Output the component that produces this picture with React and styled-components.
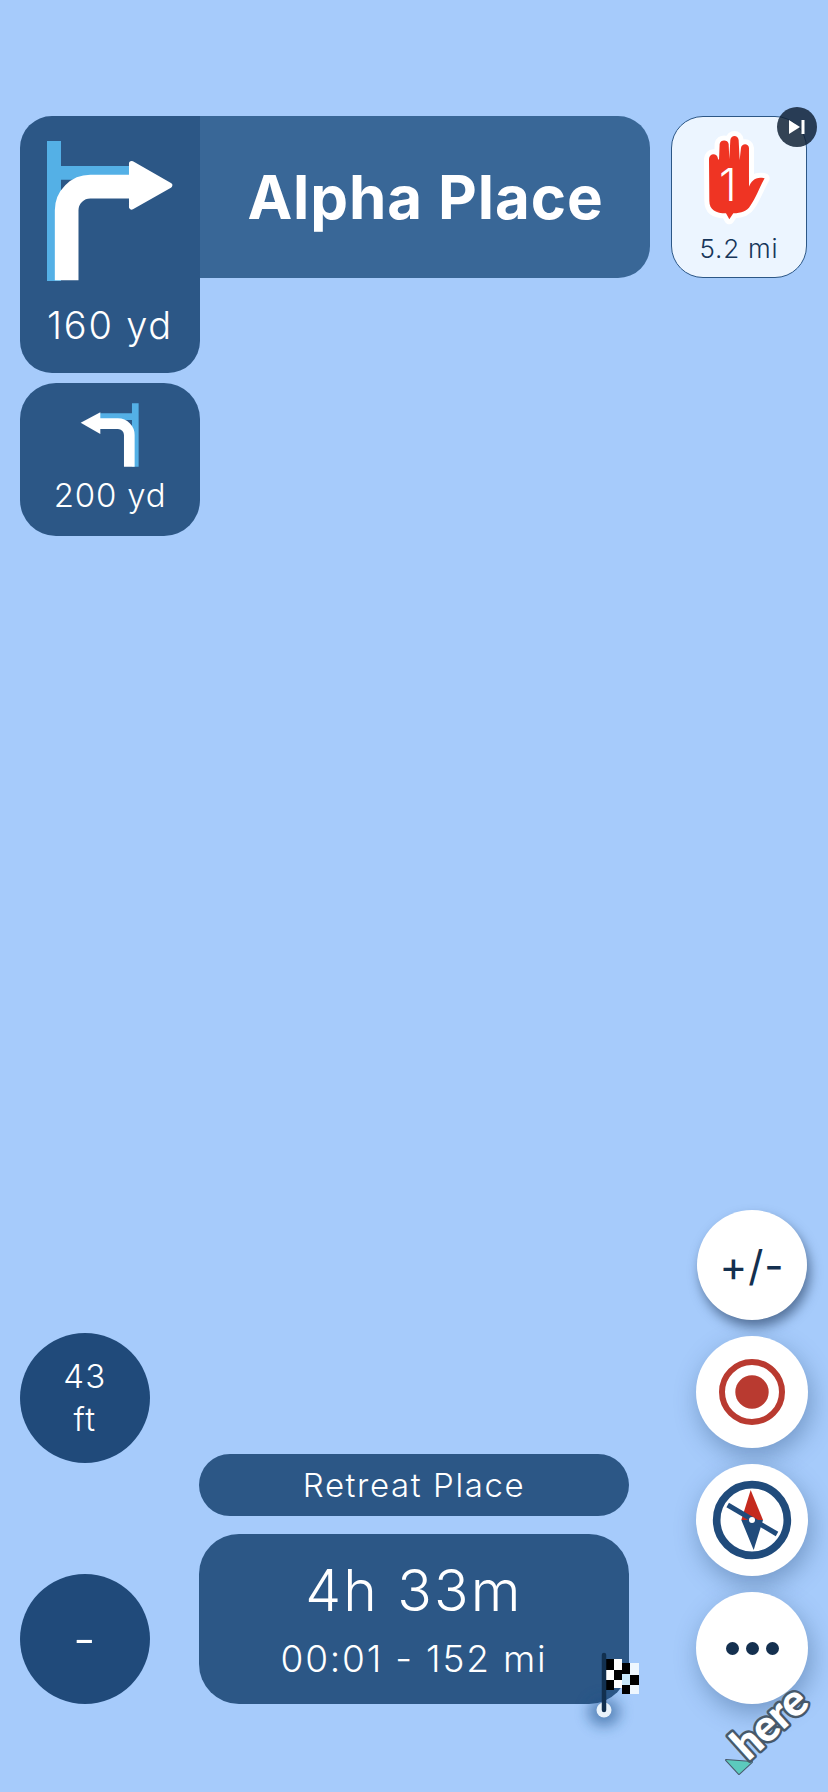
import React from "react";
import styled, { createGlobalStyle } from "styled-components";

const Global = createGlobalStyle`
  html, body { margin: 0; padding: 0; background: #a6cbfb; }
  * { box-sizing: border-box; }
`;

const Screen = styled.div`
  position: relative;
  width: 828px;
  height: 1792px;
  padding: 116px 20px 88px;
  display: flex;
  flex-direction: column;
  justify-content: space-between;
  overflow: hidden;
  background: #a6cbfb;
  font-family: Inter, "Liberation Sans", sans-serif;
  font-weight: 350;
  color: #fff;
`;

const TopRow = styled.div`
  display: flex;
  align-items: flex-start;
`;

const Maneuvers = styled.div`
  width: 180px;
  display: flex;
  flex-direction: column;
  gap: 10px;
`;

const ManeuverCard = styled.div`
  height: ${(p) => p.$height}px;
  padding-top: ${(p) => p.$top}px;
  display: flex;
  flex-direction: column;
  align-items: center;
  background: #2c5786;
  border-radius: ${(p) => p.$radius};
`;

const Distance = styled.div`
  font-size: ${(p) => p.$size}px;
  line-height: 1;
  margin-top: ${(p) => p.$gap}px;
  letter-spacing: ${(p) => p.$spacing}px;
  white-space: nowrap;
`;

const StreetBar = styled.div`
  width: 450px;
  height: 162px;
  display: flex;
  align-items: center;
  justify-content: center;
  padding-left: 1px;
  background: #396797;
  border-radius: 0 32px 32px 0;
  font-size: 60px;
  font-weight: 700;
  letter-spacing: 0.9px;
`;

const WarningCard = styled.div`
  position: relative;
  width: 136px;
  height: 162px;
  margin-left: 21px;
  padding-top: 13px;
  display: flex;
  flex-direction: column;
  align-items: center;
  background: #ecf5ff;
  border: 1px solid #2c5786;
  border-radius: 32px;
  color: #17365a;
`;

const WarningText = styled.div`
  margin-top: 4px;
  font-size: 26px;
  line-height: 30px;
  letter-spacing: 0.8px;
`;

const SkipBadge = styled.div`
  position: absolute;
  top: -10px;
  right: -11px;
  width: 40px;
  height: 40px;
  display: flex;
  align-items: center;
  justify-content: center;
  border-radius: 50%;
  background: rgba(16, 32, 52, 0.84);
`;

const BottomRow = styled.div`
  display: flex;
  align-items: flex-end;
`;

const InfoColumn = styled.div`
  width: 130px;
  display: flex;
  flex-direction: column;
  gap: 111px;
`;

const InfoCircle = styled.div`
  width: 130px;
  height: 130px;
  display: flex;
  align-items: center;
  justify-content: center;
  text-align: center;
  border-radius: 50%;
  background: #204a7a;
  font-size: ${(p) => p.$size}px;
  line-height: 43px;
  letter-spacing: 1.3px;
`;

const RouteColumn = styled.div`
  width: 430px;
  margin-left: 49px;
  display: flex;
  flex-direction: column;
  gap: 18px;
`;

const DestinationPill = styled.div`
  height: 62px;
  display: flex;
  align-items: center;
  justify-content: center;
  border-radius: 31px;
  background: #2c5786;
  font-size: 33px;
  letter-spacing: 1.6px;
`;

const EtaPanel = styled.div`
  position: relative;
  height: 170px;
  padding-top: 23px;
  display: flex;
  flex-direction: column;
  align-items: center;
  border-radius: 40px;
  background: #2c5786;
`;

const Duration = styled.div`
  font-size: 57px;
  line-height: 68px;
  letter-spacing: 2.2px;
`;

const Arrival = styled.div`
  margin-top: 12px;
  font-size: 37px;
  line-height: 44px;
  letter-spacing: 1.8px;
`;

const FlagMarker = styled.svg`
  position: absolute;
  left: 380px;
  top: 104px;
  overflow: visible;
`;

const ActionColumn = styled.div`
  width: 112px;
  margin-left: 67px;
  display: flex;
  flex-direction: column;
  gap: 16px;
`;

const ActionButton = styled.div`
  width: ${(p) => (p.$raised ? 110 : 112)}px;
  height: ${(p) => (p.$raised ? 110 : 112)}px;
  margin-left: ${(p) => (p.$raised ? 1 : 0)}px;
  display: flex;
  align-items: center;
  justify-content: center;
  gap: 7px;
  border-radius: 50%;
  background: #fff;
  color: #14304f;
  font-size: 42px;
  font-weight: 400;
  letter-spacing: 1px;
  box-shadow: ${(p) =>
    p.$raised
      ? "3px 7px 12px rgba(30, 55, 90, 0.6)"
      : "3px 9px 24px rgba(35, 70, 115, 0.38)"};
`;

const Dot = styled.span`
  width: 13px;
  height: 13px;
  border-radius: 50%;
  background: #14304f;
`;

const HereLogo = styled.svg`
  position: absolute;
  right: 12px;
  bottom: 14px;
  overflow: visible;
`;

const TurnRight = () => (
  <svg width="133.3" height="146.7" viewBox="130 110 400 440">
    <path d="M142 122H184V197H400V238H184V542H142Z" fill="#54b0e6" />
    <path d="M201 540V330A71 71 0 0 1 272 259H400" fill="none" stroke="#fff" strokeWidth="71" />
    <path d="M396 190L510 255L396 320Z" fill="#fff" stroke="#fff" strokeWidth="16" strokeLinejoin="round" />
  </svg>
);

const TurnLeft = () => (
  <svg width="63.3" height="70" viewBox="235 90 190 210">
    <path d="M417 100H397V130H300V150H397V290H417Z" fill="#54b0e6" />
    <path d="M389 290V195A34 34 0 0 0 355 161H295" fill="none" stroke="#fff" strokeWidth="32" />
    <path d="M302 127L243 158L302 192Z" fill="#fff" />
  </svg>
);

const Hand = () => (
  <svg width="73.3" height="100" viewBox="190 118 220 300">
    <path
      d="M272 386L262 368C232 368 212 358 212 330L211 205C212 186 236 186 238 204L241 208L243 160C245 146 268 146 270 160L272 205L275 148C277 132 298 132 300 148L303 208L307 172C309 157 330 157 331 172L331 288C338 270 352 256 378 263C362 290 352 322 335 345C325 362 308 367 284 368Z"
      fill="#ef3423"
      stroke="#fff"
      strokeWidth="30"
      strokeLinejoin="round"
      paintOrder="stroke"
    />
    <text x="268" y="330" textAnchor="middle" fill="#fff" fontSize="135" fontWeight="350" fontFamily="Inter, sans-serif">1</text>
  </svg>
);

const SkipIcon = () => (
  <svg width="18" height="16" viewBox="0 0 18 16">
    <path d="M1 1L12 8L1 15Z" fill="#fff" />
    <rect x="13.5" y="1" width="3" height="14" fill="#fff" />
  </svg>
);

const RecordIcon = () => (
  <svg width="66" height="66" viewBox="0 0 66 66">
    <circle cx="33" cy="33" r="30" fill="none" stroke="#b93a30" strokeWidth="6" />
    <circle cx="33" cy="33" r="16.7" fill="#b93a30" />
  </svg>
);

const CompassIcon = () => (
  <svg width="80" height="80" viewBox="65 60 240 240">
    <circle cx="185" cy="180" r="106" fill="none" stroke="#204b7b" strokeWidth="23" />
    <path d="M181 90L153 180H218Z" fill="#c52a1e" />
    <path d="M153 180H218L190 270Z" fill="#204b7b" />
    <path d="M112 135L260 222" stroke="#204b7b" strokeWidth="15" />
    <circle cx="185" cy="180" r="9" fill="#fff" />
  </svg>
);

const flagCells = [
  [0, 0, 8, 11, "#000"], [0, 11, 8, 10, "#fff"], [0, 21, 8, 10, "#000"],
  [8, 0, 8, 11, "#fff"], [8, 11, 8, 10, "#000"], [8, 21, 8, 8, "#fff"],
  [16, 4, 8, 11, "#000"], [16, 15, 8, 11, "#c8e8fb"], [16, 26, 8, 9, "#000"],
  [24, 4, 9, 12, "#eef7ff"], [24, 16, 9, 10, "#000"], [24, 26, 9, 9, "#eef7ff"],
];

const Flag = () => (
  <FlagMarker width="40" height="70" viewBox="0 0 40 70">
    <defs>
      <filter id="flagGlow" x="-100%" y="-100%" width="300%" height="300%">
        <feGaussianBlur stdDeviation="7" />
      </filter>
    </defs>
    <ellipse cx="25" cy="74" rx="16" ry="14" fill="#1f4f86" opacity="0.55" filter="url(#flagGlow)" />
    <circle cx="25" cy="72" r="7.5" fill="#e9f3fb" />
    <g transform="translate(27 21)">
      {flagCells.map(([x, y, w, h, c]) => (
        <rect key={`${x}-${y}`} x={x} y={y} width={w} height={h} fill={c} />
      ))}
    </g>
    <path d="M25 17V72" stroke="#12304f" strokeWidth="4.5" strokeLinecap="round" />
  </FlagMarker>
);

const Logo = () => (
  <HereLogo width="92" height="84" viewBox="0 0 92 84">
    <path d="M2 66L28 68L15 80Z" fill="#5ccabd" stroke="#47596a" strokeWidth="2" strokeLinejoin="round" paintOrder="stroke" />
    <text
      x="0"
      y="0"
      transform="translate(24 68) rotate(-42)"
      fill="#fff"
      stroke="#47596a"
      strokeWidth="5"
      strokeLinejoin="round"
      paintOrder="stroke"
      fontSize="44"
      fontWeight="900"
      letterSpacing="-1"
      fontFamily="Lato, Inter, sans-serif"
    >
      here
    </text>
  </HereLogo>
);

export default function App() {
  return (
    <Screen>
      <Global />
      <TopRow>
        <Maneuvers>
          <ManeuverCard $height={257} $top={21} $radius="32px 0 32px 32px">
            <TurnRight />
            <Distance $size={38} $gap={22} $spacing={1.8}>160 yd</Distance>
          </ManeuverCard>
          <ManeuverCard $height={153} $top={17} $radius="36px">
            <TurnLeft />
            <Distance $size={33} $gap={9} $spacing={0.8}>200 yd</Distance>
          </ManeuverCard>
        </Maneuvers>
        <StreetBar>Alpha Place</StreetBar>
        <WarningCard>
          <Hand />
          <WarningText>5.2 mi</WarningText>
          <SkipBadge>
            <SkipIcon />
          </SkipBadge>
        </WarningCard>
      </TopRow>
      <BottomRow>
        <InfoColumn>
          <InfoCircle $size={33}>43<br />ft</InfoCircle>
          <InfoCircle $size={50}>-</InfoCircle>
        </InfoColumn>
        <RouteColumn>
          <DestinationPill>Retreat Place</DestinationPill>
          <EtaPanel>
            <Duration>4h 33m</Duration>
            <Arrival>00:01 - 152 mi</Arrival>
            <Flag />
          </EtaPanel>
        </RouteColumn>
        <ActionColumn>
          <ActionButton $raised>+/-</ActionButton>
          <ActionButton><RecordIcon /></ActionButton>
          <ActionButton><CompassIcon /></ActionButton>
          <ActionButton><Dot /><Dot /><Dot /></ActionButton>
        </ActionColumn>
      </BottomRow>
      <Logo />
    </Screen>
  );
}
